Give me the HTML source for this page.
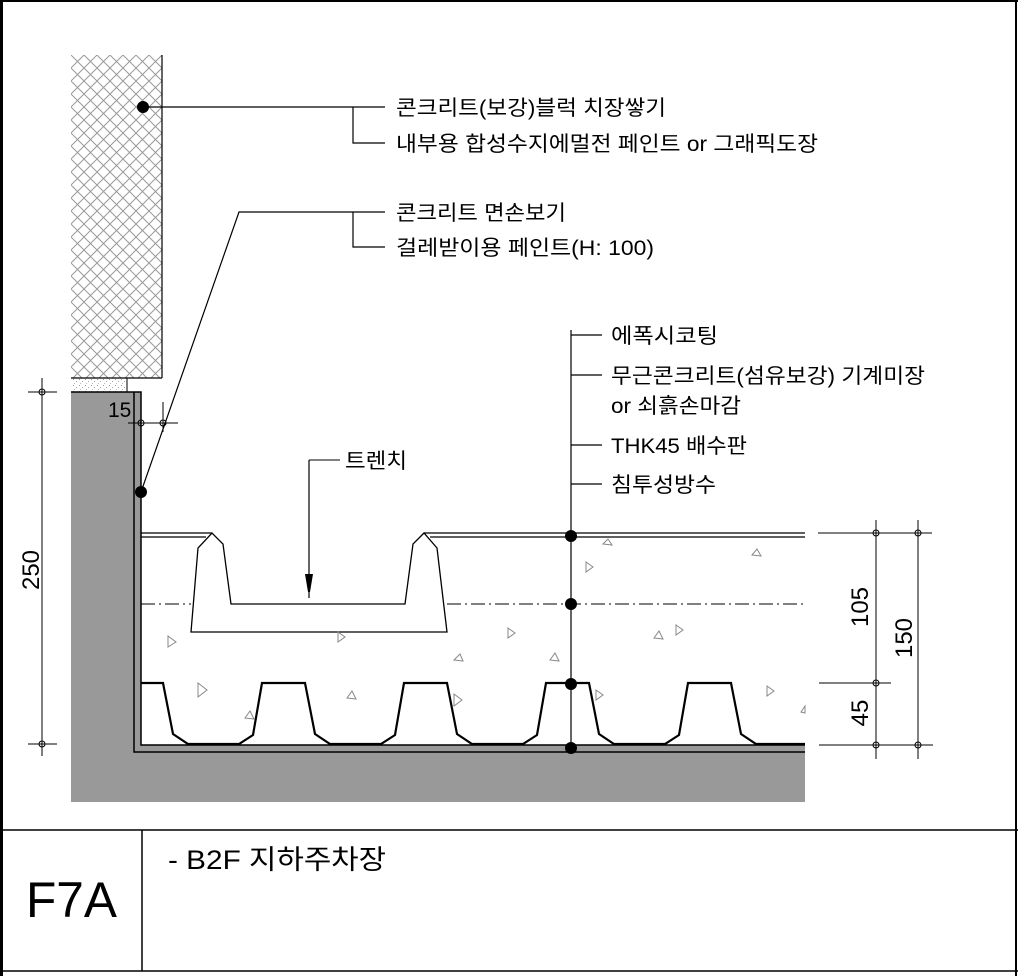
<!DOCTYPE html>
<html><head><meta charset="utf-8"><style>
html,body{margin:0;padding:0;background:#fff;}
svg{display:block;}
text{font-family:"Liberation Sans","Noto Sans CJK KR",sans-serif;fill:#000;}
</style></head><body>
<svg width="1018" height="976" viewBox="0 0 1018 976" xmlns="http://www.w3.org/2000/svg">
<defs>
<pattern id="hatch" width="13" height="13" patternUnits="userSpaceOnUse" x="71" y="55">
<path d="M0 0L13 13M13 0L0 13" stroke="#999" stroke-width="1"/>
</pattern>
<pattern id="sand" width="6" height="6" patternUnits="userSpaceOnUse">
<rect x="1" y="1" width="1" height="1" fill="#999"/><rect x="4" y="3" width="1" height="1" fill="#aaa"/><rect x="2" y="5" width="1" height="1" fill="#bbb"/>
</pattern>
</defs>
<rect x="0" y="0" width="3" height="976" fill="#000"/>
<line x1="0" y1="1" x2="1018" y2="1" stroke="#000" stroke-width="2"/>
<line x1="1016" y1="0" x2="1016" y2="976" stroke="#000" stroke-width="2"/>
<line x1="0" y1="830" x2="1018" y2="830" stroke="#000" stroke-width="1.5"/>
<line x1="142" y1="830" x2="142" y2="971" stroke="#000" stroke-width="1.5"/>
<line x1="0" y1="971" x2="1018" y2="971" stroke="#000" stroke-width="1.5"/>

<rect x="71" y="55" width="91" height="323" fill="url(#hatch)"/>
<line x1="162" y1="55" x2="162" y2="378" stroke="#000" stroke-width="1.2"/>
<line x1="71" y1="378" x2="162" y2="378" stroke="#000" stroke-width="1.2"/>
<rect x="71" y="378" width="56" height="14" fill="url(#sand)"/>
<line x1="127" y1="378" x2="127" y2="392" stroke="#000"/>

<path d="M71 392H141V745H805V802H71Z" fill="#999"/>
<path d="M134 392V752H805" fill="none" stroke="#000" stroke-width="1.5"/>
<path d="M71 392H141V745H805" fill="none" stroke="#000" stroke-width="1.5"/>

<line x1="141" y1="533" x2="212" y2="533" stroke="#000" stroke-width="1.3"/>
<line x1="141" y1="537" x2="206" y2="537" stroke="#000" stroke-width="1.3"/>
<line x1="424" y1="533" x2="805" y2="533" stroke="#000" stroke-width="1.3"/>
<line x1="430" y1="537" x2="805" y2="537" stroke="#000" stroke-width="1.3"/>
<path d="M191 632L198 548L212 533L223 544L231 604H405L413 544L424 533L437 548L447 632Z" fill="#fff" stroke="#000" stroke-width="1.3"/>
<line x1="141" y1="604" x2="191" y2="604" stroke="#000" stroke-dasharray="14 4 2 4"/>
<line x1="447" y1="604" x2="805" y2="604" stroke="#000" stroke-dasharray="14 4 2 4"/>
<line x1="309" y1="460" x2="309" y2="598" stroke="#000" stroke-width="1.2"/>
<path d="M305 574H313L310 592H308Z" fill="#000"/>
<polyline points="309,460 340,460" fill="none" stroke="#000"/>

<polyline fill="none" stroke="#000" stroke-width="2.2" points="141,683 163,683 173,734 188,744 239,744 253,735 262,683 305,683 315,734 330,744 381,744 395,735 404,683 447,683 457,734 472,744 523,744 537,735 546,683 589,683 599,734 614,744 665,744 679,735 688,683 731,683 741,734 756,744 805,744"/>

<g fill="none" stroke="#888" stroke-width="1">
<path d="M168 636l8 6-8 5z"/><path d="M338 632l7 5-7 5z"/><path d="M198 683l9 7-9 7z"/><path d="M347 698l5-7 4 8z"/><path d="M245 718l5-7 4 8z"/><path d="M454 694l8 6-8 6z"/><path d="M508 628l7 5-7 5z"/><path d="M550 660l5-7 4 8z"/><path d="M586 562l7 5-7 5z"/><path d="M603 544l5-5 4 6z"/><path d="M654 638l5-7 4 8z"/><path d="M676 625l7 5-7 5z"/><path d="M752 555l5-6 4 7z"/><path d="M767 686l7 5-7 5z"/><path d="M596 690l7 5-7 5z"/><path d="M801 712l4-6v7z"/><path d="M454 660l6-6 3 7z"/>
</g>

<line x1="571" y1="330" x2="571" y2="752" stroke="#000" stroke-width="1.2"/>
<g stroke="#000" stroke-width="1.2">
<line x1="571" y1="335" x2="602" y2="335"/><line x1="571" y1="375" x2="602" y2="375"/><line x1="571" y1="445" x2="602" y2="445"/><line x1="571" y1="484" x2="602" y2="484"/>
</g>
<g fill="#000"><circle cx="571" cy="536" r="6"/><circle cx="571" cy="604" r="6"/><circle cx="571" cy="684" r="6"/><circle cx="571" cy="748" r="6"/><circle cx="141" cy="492" r="6"/><circle cx="143" cy="107" r="6"/></g>
<g font-size="21">
<text x="611" y="343" textLength="107" lengthAdjust="spacingAndGlyphs">에폭시코팅</text>
<text x="611" y="383" textLength="314" lengthAdjust="spacingAndGlyphs">무근콘크리트(섬유보강) 기계미장</text>
<text x="611" y="413" textLength="130" lengthAdjust="spacingAndGlyphs">or 쇠흙손마감</text>
<text x="611" y="453" textLength="136" lengthAdjust="spacingAndGlyphs">THK45 배수판</text>
<text x="611" y="492" textLength="105" lengthAdjust="spacingAndGlyphs">침투성방수</text>
<text x="345" y="468" textLength="62" lengthAdjust="spacingAndGlyphs">트렌치</text>
</g>

<g stroke="#000" stroke-width="1.2" fill="none">
<path d="M143 107H385M353 107V143H385"/>
<path d="M141 492L239 212H385M353 212V247H385"/>
</g>
<g font-size="21">
<text x="396" y="115" textLength="270" lengthAdjust="spacingAndGlyphs">콘크리트(보강)블럭 치장쌓기</text>
<text x="396" y="151" textLength="422" lengthAdjust="spacingAndGlyphs">내부용 합성수지에멀전 페인트 or 그래픽도장</text>
<text x="396" y="220" textLength="170" lengthAdjust="spacingAndGlyphs">콘크리트 면손보기</text>
<text x="396" y="255" textLength="258" lengthAdjust="spacingAndGlyphs">걸레받이용 페인트(H: 100)</text>
</g>

<g stroke="#000" stroke-width="1" fill="none">
<line x1="42" y1="378" x2="42" y2="756"/><line x1="28" y1="392" x2="57" y2="392"/><line x1="28" y1="744" x2="57" y2="744"/>
<circle cx="42" cy="392" r="3"/><circle cx="42" cy="744" r="3"/>
<line x1="128" y1="423" x2="178" y2="423"/><line x1="163" y1="402" x2="163" y2="432"/>
<circle cx="141" cy="423" r="3"/><circle cx="163" cy="423" r="3"/>
<line x1="818" y1="533" x2="932" y2="533"/><line x1="819" y1="683" x2="891" y2="683"/><line x1="819" y1="745" x2="933" y2="745"/>
<line x1="876" y1="520" x2="876" y2="759"/><line x1="918" y1="520" x2="918" y2="759"/>
<circle cx="876" cy="533" r="3"/><circle cx="918" cy="533" r="3"/><circle cx="876" cy="683" r="3"/><circle cx="876" cy="745" r="3"/><circle cx="918" cy="745" r="3"/>
</g>
<g font-size="24">
<text x="108" y="417" font-size="21">15</text>
<text transform="translate(39,570) rotate(-90)" text-anchor="middle">250</text>
<text transform="translate(868,607) rotate(-90)" text-anchor="middle">105</text>
<text transform="translate(868,713) rotate(-90)" text-anchor="middle">45</text>
<text transform="translate(912,638) rotate(-90)" text-anchor="middle">150</text>
</g>

<text x="26" y="917" font-size="50" textLength="91" lengthAdjust="spacingAndGlyphs">F7A</text>
<text x="168" y="869" font-size="27" textLength="218" lengthAdjust="spacingAndGlyphs">- B2F 지하주차장</text>
</svg>
</body></html>
